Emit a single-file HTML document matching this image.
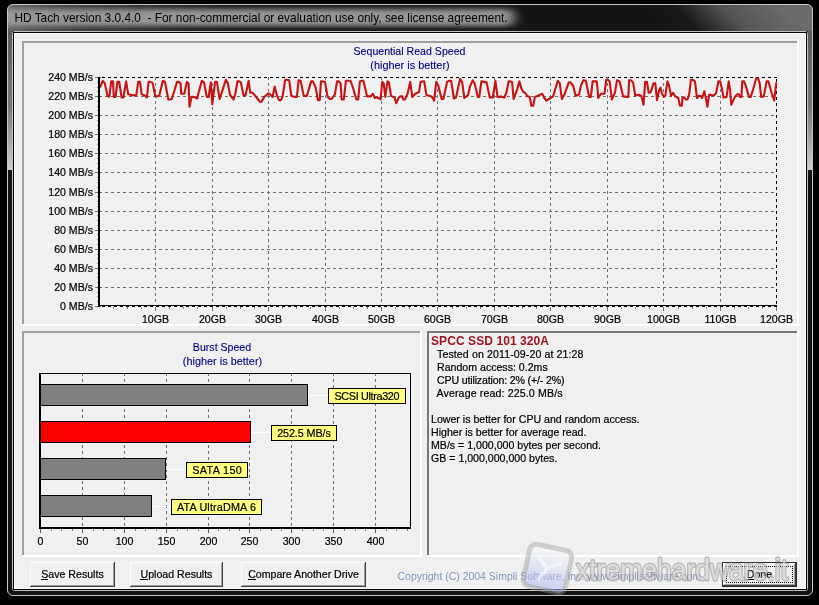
<!DOCTYPE html><html><head><meta charset="utf-8"><style>
html,body{margin:0;padding:0;background:#000;width:819px;height:605px;overflow:hidden}
svg{position:absolute;left:0;top:0;will-change:transform}
text{font-family:"Liberation Sans",sans-serif}
.t{font-size:10.6px;fill:#000;stroke:currentColor;stroke-width:0.2px}
</style></head><body>
<svg width="819" height="605" viewBox="0 0 819 605">
<defs>
<linearGradient id="sideg" x1="0" y1="0" x2="0" y2="1"><stop offset="0" stop-color="#5c5c5c"/><stop offset="0.55" stop-color="#7a7a7a"/><stop offset="1" stop-color="#cfcfcf"/></linearGradient>
<linearGradient id="rtg" gradientUnits="userSpaceOnUse" x1="660" y1="31" x2="760" y2="-65"><stop offset="0" stop-color="#141414"/><stop offset="0.2" stop-color="#191919"/><stop offset="0.45" stop-color="#555555"/><stop offset="0.75" stop-color="#6a6a6a"/><stop offset="1" stop-color="#6e6e6e"/></linearGradient>
<filter id="blurg" x="-20%" y="-100%" width="140%" height="300%"><feGaussianBlur stdDeviation="6 2.4"/></filter>
<linearGradient id="wmg" x1="0" y1="0" x2="0" y2="1"><stop offset="0" stop-color="#ffffff" stop-opacity="0.5"/><stop offset="1" stop-color="#a8b4e8" stop-opacity="0.55"/></linearGradient>
<filter id="blurw" x="-30%" y="-30%" width="160%" height="160%"><feGaussianBlur stdDeviation="1.2"/></filter>
<linearGradient id="ltg" x1="0" y1="0" x2="1" y2="0"><stop offset="0" stop-color="#646464"/><stop offset="0.3" stop-color="#3c3c3c"/><stop offset="1" stop-color="#141414"/></linearGradient>
</defs>
<rect x="7" y="4" width="806" height="592" rx="6" fill="#141414"/>
<clipPath id="fclip"><rect x="7.5" y="4.5" width="805" height="591" rx="5.5"/></clipPath>
<rect x="600" y="4" width="213" height="27" fill="url(#rtg)" clip-path="url(#fclip)"/>
<rect x="8" y="31" width="4" height="139" fill="url(#sideg)"/>
<rect x="808" y="31" width="4" height="139" fill="url(#sideg)"/>
<rect x="7" y="4" width="221" height="27" fill="url(#ltg)" clip-path="url(#fclip)"/>
<clipPath id="tclip"><rect x="8" y="5" width="804" height="26" rx="5"/></clipPath>
<g clip-path="url(#tclip)"><rect x="-4" y="9" width="518" height="17" rx="6" fill="#959595" filter="url(#blurg)"/></g>
<rect x="7.5" y="4.5" width="805" height="591" rx="5.5" fill="none" stroke="#c4c4c4" stroke-width="1"/>
<rect x="12.5" y="31.5" width="795" height="559" rx="2" fill="none" stroke="#c0c0c0" stroke-width="1"/>
<rect x="13.5" y="32.5" width="793" height="557" fill="#f0f0f0" stroke="#000" stroke-width="1"/>
<rect x="14.5" y="33.5" width="791" height="555" fill="none" stroke="#fff" stroke-width="1"/>
<text x="14.4" y="22" style="font-size:11.88px;fill:#000;white-space:pre" xml:space="preserve">HD Tach version 3.0.4.0  - For non-commercial or evaluation use only, see license agreement.</text>
<rect x="22" y="41" width="777" height="2" fill="#a0a0a0"/>
<rect x="22" y="41" width="2" height="285" fill="#a0a0a0"/>
<rect x="22" y="324" width="777" height="2" fill="#fff"/>
<rect x="797" y="41" width="2" height="285" fill="#fff"/>
<rect x="22" y="331" width="400" height="2" fill="#a0a0a0"/>
<rect x="22" y="331" width="2" height="226" fill="#a0a0a0"/>
<rect x="22" y="555" width="400" height="2" fill="#fff"/>
<rect x="420" y="331" width="2" height="226" fill="#fff"/>
<rect x="427" y="331" width="372" height="2" fill="#787878"/>
<rect x="427" y="331" width="2" height="226" fill="#787878"/>
<rect x="427" y="555" width="372" height="2" fill="#fff"/>
<rect x="797" y="331" width="2" height="226" fill="#fff"/>
<text class="t" x="409.5" y="55" text-anchor="middle" style="fill:#000080;stroke:#000080;stroke-width:0.1px">Sequential Read Speed</text>
<text class="t" x="410" y="68.5" text-anchor="middle" style="fill:#000080;stroke:#000080;stroke-width:0.1px;font-size:10.9px">(higher is better)</text>
<line x1="99" y1="96.5" x2="776" y2="96.5" stroke="#707070" stroke-width="1" stroke-dasharray="3 3"/>
<line x1="99" y1="115.5" x2="776" y2="115.5" stroke="#707070" stroke-width="1" stroke-dasharray="3 3"/>
<line x1="99" y1="134.5" x2="776" y2="134.5" stroke="#707070" stroke-width="1" stroke-dasharray="3 3"/>
<line x1="99" y1="153.5" x2="776" y2="153.5" stroke="#707070" stroke-width="1" stroke-dasharray="3 3"/>
<line x1="99" y1="172.5" x2="776" y2="172.5" stroke="#707070" stroke-width="1" stroke-dasharray="3 3"/>
<line x1="99" y1="192.5" x2="776" y2="192.5" stroke="#707070" stroke-width="1" stroke-dasharray="3 3"/>
<line x1="99" y1="211.5" x2="776" y2="211.5" stroke="#707070" stroke-width="1" stroke-dasharray="3 3"/>
<line x1="99" y1="230.5" x2="776" y2="230.5" stroke="#707070" stroke-width="1" stroke-dasharray="3 3"/>
<line x1="99" y1="249.5" x2="776" y2="249.5" stroke="#707070" stroke-width="1" stroke-dasharray="3 3"/>
<line x1="99" y1="268.5" x2="776" y2="268.5" stroke="#707070" stroke-width="1" stroke-dasharray="3 3"/>
<line x1="99" y1="287.5" x2="776" y2="287.5" stroke="#707070" stroke-width="1" stroke-dasharray="3 3"/>
<line x1="98" y1="77.5" x2="777" y2="77.5" stroke="#000" stroke-width="1" stroke-dasharray="3 3" stroke-dashoffset="2"/>
<line x1="155.5" y1="77" x2="155.5" y2="305" stroke="#707070" stroke-width="1" stroke-dasharray="3 3"/>
<line x1="212.5" y1="77" x2="212.5" y2="305" stroke="#707070" stroke-width="1" stroke-dasharray="3 3"/>
<line x1="268.5" y1="77" x2="268.5" y2="305" stroke="#707070" stroke-width="1" stroke-dasharray="3 3"/>
<line x1="325.5" y1="77" x2="325.5" y2="305" stroke="#707070" stroke-width="1" stroke-dasharray="3 3"/>
<line x1="381.5" y1="77" x2="381.5" y2="305" stroke="#707070" stroke-width="1" stroke-dasharray="3 3"/>
<line x1="437.5" y1="77" x2="437.5" y2="305" stroke="#707070" stroke-width="1" stroke-dasharray="3 3"/>
<line x1="494.5" y1="77" x2="494.5" y2="305" stroke="#707070" stroke-width="1" stroke-dasharray="3 3"/>
<line x1="550.5" y1="77" x2="550.5" y2="305" stroke="#707070" stroke-width="1" stroke-dasharray="3 3"/>
<line x1="607.5" y1="77" x2="607.5" y2="305" stroke="#707070" stroke-width="1" stroke-dasharray="3 3"/>
<line x1="663.5" y1="77" x2="663.5" y2="305" stroke="#707070" stroke-width="1" stroke-dasharray="3 3"/>
<line x1="720.5" y1="77" x2="720.5" y2="305" stroke="#707070" stroke-width="1" stroke-dasharray="3 3"/>
<line x1="776.5" y1="77" x2="776.5" y2="306" stroke="#000" stroke-width="1" stroke-dasharray="3 3" stroke-dashoffset="4"/>
<text class="t" x="93" y="81" text-anchor="end">240 MB/s</text>
<rect x="95" y="77" width="6" height="1" fill="#707070"/>
<rect x="97" y="82" width="1" height="1" fill="#909090"/>
<rect x="97" y="87" width="1" height="1" fill="#909090"/>
<rect x="97" y="91" width="1" height="1" fill="#909090"/>
<text class="t" x="93" y="100" text-anchor="end">220 MB/s</text>
<rect x="95" y="96" width="6" height="1" fill="#707070"/>
<rect x="97" y="101" width="1" height="1" fill="#909090"/>
<rect x="97" y="106" width="1" height="1" fill="#909090"/>
<rect x="97" y="110" width="1" height="1" fill="#909090"/>
<text class="t" x="93" y="119" text-anchor="end">200 MB/s</text>
<rect x="95" y="115" width="6" height="1" fill="#707070"/>
<rect x="97" y="120" width="1" height="1" fill="#909090"/>
<rect x="97" y="125" width="1" height="1" fill="#909090"/>
<rect x="97" y="129" width="1" height="1" fill="#909090"/>
<text class="t" x="93" y="138" text-anchor="end">180 MB/s</text>
<rect x="95" y="134" width="6" height="1" fill="#707070"/>
<rect x="97" y="139" width="1" height="1" fill="#909090"/>
<rect x="97" y="144" width="1" height="1" fill="#909090"/>
<rect x="97" y="149" width="1" height="1" fill="#909090"/>
<text class="t" x="93" y="157" text-anchor="end">160 MB/s</text>
<rect x="95" y="153" width="6" height="1" fill="#707070"/>
<rect x="97" y="158" width="1" height="1" fill="#909090"/>
<rect x="97" y="163" width="1" height="1" fill="#909090"/>
<rect x="97" y="168" width="1" height="1" fill="#909090"/>
<text class="t" x="93" y="176" text-anchor="end">140 MB/s</text>
<rect x="95" y="172" width="6" height="1" fill="#707070"/>
<rect x="97" y="177" width="1" height="1" fill="#909090"/>
<rect x="97" y="182" width="1" height="1" fill="#909090"/>
<rect x="97" y="187" width="1" height="1" fill="#909090"/>
<text class="t" x="93" y="196" text-anchor="end">120 MB/s</text>
<rect x="95" y="192" width="6" height="1" fill="#707070"/>
<rect x="97" y="196" width="1" height="1" fill="#909090"/>
<rect x="97" y="201" width="1" height="1" fill="#909090"/>
<rect x="97" y="206" width="1" height="1" fill="#909090"/>
<text class="t" x="93" y="215" text-anchor="end">100 MB/s</text>
<rect x="95" y="211" width="6" height="1" fill="#707070"/>
<rect x="97" y="215" width="1" height="1" fill="#909090"/>
<rect x="97" y="220" width="1" height="1" fill="#909090"/>
<rect x="97" y="225" width="1" height="1" fill="#909090"/>
<text class="t" x="93" y="234" text-anchor="end">80 MB/s</text>
<rect x="95" y="230" width="6" height="1" fill="#707070"/>
<rect x="97" y="234" width="1" height="1" fill="#909090"/>
<rect x="97" y="239" width="1" height="1" fill="#909090"/>
<rect x="97" y="244" width="1" height="1" fill="#909090"/>
<text class="t" x="93" y="253" text-anchor="end">60 MB/s</text>
<rect x="95" y="249" width="6" height="1" fill="#707070"/>
<rect x="97" y="254" width="1" height="1" fill="#909090"/>
<rect x="97" y="258" width="1" height="1" fill="#909090"/>
<rect x="97" y="263" width="1" height="1" fill="#909090"/>
<text class="t" x="93" y="272" text-anchor="end">40 MB/s</text>
<rect x="95" y="268" width="6" height="1" fill="#707070"/>
<rect x="97" y="273" width="1" height="1" fill="#909090"/>
<rect x="97" y="277" width="1" height="1" fill="#909090"/>
<rect x="97" y="282" width="1" height="1" fill="#909090"/>
<text class="t" x="93" y="291" text-anchor="end">20 MB/s</text>
<rect x="95" y="287" width="6" height="1" fill="#707070"/>
<rect x="97" y="292" width="1" height="1" fill="#909090"/>
<rect x="97" y="296" width="1" height="1" fill="#909090"/>
<rect x="97" y="301" width="1" height="1" fill="#909090"/>
<text class="t" x="93" y="310" text-anchor="end">0 MB/s</text>
<rect x="95" y="306" width="6" height="1" fill="#707070"/>
<rect x="155" y="307" width="1" height="4" fill="#707070"/>
<text class="t" x="155.5" y="323" text-anchor="middle">10GB</text>
<rect x="212" y="307" width="1" height="4" fill="#707070"/>
<text class="t" x="212.5" y="323" text-anchor="middle">20GB</text>
<rect x="268" y="307" width="1" height="4" fill="#707070"/>
<text class="t" x="268.5" y="323" text-anchor="middle">30GB</text>
<rect x="325" y="307" width="1" height="4" fill="#707070"/>
<text class="t" x="325.5" y="323" text-anchor="middle">40GB</text>
<rect x="381" y="307" width="1" height="4" fill="#707070"/>
<text class="t" x="381.5" y="323" text-anchor="middle">50GB</text>
<rect x="437" y="307" width="1" height="4" fill="#707070"/>
<text class="t" x="437.5" y="323" text-anchor="middle">60GB</text>
<rect x="494" y="307" width="1" height="4" fill="#707070"/>
<text class="t" x="494.5" y="323" text-anchor="middle">70GB</text>
<rect x="550" y="307" width="1" height="4" fill="#707070"/>
<text class="t" x="550.5" y="323" text-anchor="middle">80GB</text>
<rect x="607" y="307" width="1" height="4" fill="#707070"/>
<text class="t" x="607.5" y="323" text-anchor="middle">90GB</text>
<rect x="663" y="307" width="1" height="4" fill="#707070"/>
<text class="t" x="663.5" y="323" text-anchor="middle">100GB</text>
<rect x="720" y="307" width="1" height="4" fill="#707070"/>
<text class="t" x="720.5" y="323" text-anchor="middle">110GB</text>
<rect x="776" y="307" width="1" height="4" fill="#707070"/>
<text class="t" x="776.5" y="323" text-anchor="middle">120GB</text>
<rect x="113" y="307" width="1" height="2" fill="#808080"/>
<rect x="127" y="307" width="1" height="2" fill="#808080"/>
<rect x="141" y="307" width="1" height="2" fill="#808080"/>
<rect x="169" y="307" width="1" height="2" fill="#808080"/>
<rect x="183" y="307" width="1" height="2" fill="#808080"/>
<rect x="197" y="307" width="1" height="2" fill="#808080"/>
<rect x="226" y="307" width="1" height="2" fill="#808080"/>
<rect x="240" y="307" width="1" height="2" fill="#808080"/>
<rect x="254" y="307" width="1" height="2" fill="#808080"/>
<rect x="282" y="307" width="1" height="2" fill="#808080"/>
<rect x="296" y="307" width="1" height="2" fill="#808080"/>
<rect x="310" y="307" width="1" height="2" fill="#808080"/>
<rect x="339" y="307" width="1" height="2" fill="#808080"/>
<rect x="353" y="307" width="1" height="2" fill="#808080"/>
<rect x="367" y="307" width="1" height="2" fill="#808080"/>
<rect x="395" y="307" width="1" height="2" fill="#808080"/>
<rect x="409" y="307" width="1" height="2" fill="#808080"/>
<rect x="423" y="307" width="1" height="2" fill="#808080"/>
<rect x="452" y="307" width="1" height="2" fill="#808080"/>
<rect x="466" y="307" width="1" height="2" fill="#808080"/>
<rect x="480" y="307" width="1" height="2" fill="#808080"/>
<rect x="508" y="307" width="1" height="2" fill="#808080"/>
<rect x="522" y="307" width="1" height="2" fill="#808080"/>
<rect x="536" y="307" width="1" height="2" fill="#808080"/>
<rect x="565" y="307" width="1" height="2" fill="#808080"/>
<rect x="579" y="307" width="1" height="2" fill="#808080"/>
<rect x="593" y="307" width="1" height="2" fill="#808080"/>
<rect x="621" y="307" width="1" height="2" fill="#808080"/>
<rect x="635" y="307" width="1" height="2" fill="#808080"/>
<rect x="649" y="307" width="1" height="2" fill="#808080"/>
<rect x="678" y="307" width="1" height="2" fill="#808080"/>
<rect x="692" y="307" width="1" height="2" fill="#808080"/>
<rect x="706" y="307" width="1" height="2" fill="#808080"/>
<rect x="734" y="307" width="1" height="2" fill="#808080"/>
<rect x="748" y="307" width="1" height="2" fill="#808080"/>
<rect x="762" y="307" width="1" height="2" fill="#808080"/>
<polyline points="99.9,87.6 102.7,80.8 104.8,83.4 107.6,96.4 109.4,96.4 111.2,81.4 113.0,81.4 113.8,96.9 115.6,96.9 117.4,81.9 119.2,81.9 121.6,97.5 123.4,97.5 126.1,81.4 128.2,94.3 131.3,94.9 134.5,95.4 136.3,95.4 138.2,81.9 140.0,81.9 141.7,94.3 144.8,95.4 146.9,97.5 148.6,81.9 150.4,81.9 152.6,82.9 155.3,96.4 157.1,96.4 159.3,95.4 162.9,80.8 165.0,81.9 168.3,99.5 170.1,99.5 171.8,99.0 177.1,81.9 178.9,81.9 180.6,83.4 181.2,93.8 184.3,93.8 186.9,81.9 188.5,83.4 189.5,106.8 191.6,96.9 193.6,96.9 197.3,98.5 198.3,93.8 201.9,80.8 204.0,82.4 206.8,96.9 208.6,96.9 210.8,82.4 212.3,104.2 215.1,81.9 216.9,81.9 219.6,99.0 221.7,92.8 225.8,79.8 227.9,83.4 230.0,94.9 233.6,99.5 235.7,92.3 237.4,81.4 239.2,81.4 240.9,82.4 243.5,95.4 245.5,95.4 248.7,80.8 250.2,92.8 252.8,92.8 257.0,98.0 259.7,101.6 261.5,101.6 264.3,96.9 268.5,93.3 270.0,94.3 272.6,96.9 274.7,86.5 276.8,94.9 279.0,100.1 280.8,100.1 282.5,96.9 285.2,79.8 287.0,79.8 289.2,80.3 291.3,95.9 295.1,96.9 296.9,96.9 298.6,80.3 300.6,80.8 303.7,95.9 306.9,95.9 311.1,81.4 312.9,81.4 315.7,87.6 317.9,100.1 319.7,100.1 321.0,81.4 322.8,81.4 325.0,81.9 327.6,96.9 329.8,99.0 331.6,99.0 334.9,94.3 337.1,81.4 338.9,81.4 340.6,83.4 341.7,99.5 343.8,99.5 345.9,80.8 350.5,80.8 352.6,86.5 356.4,99.5 358.2,99.5 359.9,81.4 361.6,80.8 363.4,80.8 367.1,96.4 370.8,96.4 372.8,93.8 374.9,98.0 377.0,97.5 379.1,98.5 380.6,99.5 382.2,81.9 383.7,83.4 385.3,96.9 387.4,81.4 388.9,82.4 391.0,95.9 393.1,96.9 394.6,97.5 396.2,103.2 398.8,97.5 400.5,96.4 402.3,96.4 403.1,99.5 404.9,99.5 407.6,93.8 410.2,81.9 412.3,96.9 415.9,93.3 419.0,92.3 420.6,81.9 422.4,81.4 424.2,81.4 426.4,94.9 431.6,96.4 434.2,100.6 436.2,81.9 438.3,85.5 441.6,99.0 443.4,99.0 447.1,81.9 449.4,80.8 451.2,80.8 453.9,98.5 456.0,97.5 460.1,78.8 462.2,82.4 464.3,98.0 467.9,95.4 470.0,86.5 472.6,80.3 474.6,83.4 477.8,96.9 479.3,96.9 481.4,81.4 486.6,82.4 489.7,97.5 492.8,97.5 495.4,80.8 497.5,96.9 500.6,96.9 501.2,96.4 504.3,97.5 506.4,92.8 508.6,81.4 510.4,81.4 512.1,81.9 513.6,99.0 516.8,90.7 519.4,81.4 521.4,88.6 523.5,92.3 525.1,92.8 527.1,95.9 529.7,96.9 531.4,105.8 533.2,105.8 534.9,96.9 537.5,95.9 542.2,93.8 544.3,98.0 546.3,100.6 550.0,98.5 553.1,96.4 557.8,80.8 559.8,83.4 561.9,99.0 564.5,94.3 568.8,82.4 570.6,82.4 573.3,86.0 575.5,95.4 577.3,95.4 579.0,94.3 581.0,85.5 583.3,80.3 585.9,80.8 589.1,96.9 590.9,96.9 592.6,81.4 596.8,81.4 598.3,98.0 600.9,93.8 604.5,93.8 606.2,79.8 608.0,79.8 609.7,81.4 611.8,99.5 614.9,92.8 617.0,80.3 619.6,81.4 623.2,96.4 626.5,96.9 628.3,96.9 629.1,80.3 630.9,80.3 633.1,82.4 635.2,95.4 639.3,94.9 641.4,95.9 643.5,104.7 645.2,81.9 647.0,81.9 648.7,92.8 650.7,92.3 653.5,83.4 655.3,83.4 657.0,100.1 659.0,90.7 660.6,87.6 661.7,92.8 663.8,96.9 665.3,95.9 667.4,81.4 669.0,85.5 671.0,95.9 673.1,92.8 675.2,96.4 678.3,98.0 680.0,105.8 681.8,105.8 682.6,97.5 684.4,97.5 685.7,99.5 687.5,99.5 689.2,94.3 690.9,79.8 692.7,79.8 694.9,81.4 697.0,98.0 698.7,95.9 700.5,95.9 702.2,98.0 704.3,91.2 705.8,98.0 707.4,106.8 709.1,94.9 710.9,94.9 712.2,95.4 714.0,95.4 716.2,92.8 718.4,81.4 720.2,81.4 721.9,88.6 723.5,97.5 726.6,96.9 728.7,81.4 730.2,90.7 731.2,104.7 734.9,96.9 737.1,94.3 738.9,94.3 739.7,96.9 741.5,96.9 742.2,81.4 744.0,81.4 745.7,85.5 748.9,96.9 750.7,96.9 752.9,90.2 756.2,78.2 758.0,78.2 759.7,83.4 761.2,96.9 763.8,96.4 766.6,81.4 768.4,81.4 771.6,92.8 774.2,100.6 776.3,82.4" fill="none" stroke="#c41414" stroke-width="2.1" stroke-linejoin="round"/>
<rect x="98" y="77" width="2" height="230" fill="#000"/>
<rect x="98" y="305" width="679" height="1" fill="#000"/>
<line x1="98" y1="306.5" x2="777" y2="306.5" stroke="#000" stroke-width="1" stroke-dasharray="3 3" stroke-dashoffset="2"/>
<text class="t" x="222" y="351" text-anchor="middle" style="fill:#000080;stroke:#000080;stroke-width:0.1px">Burst Speed</text>
<text class="t" x="222.5" y="364.5" text-anchor="middle" style="fill:#000080;stroke:#000080;stroke-width:0.1px;font-size:10.9px">(higher is better)</text>
<line x1="82.5" y1="373" x2="82.5" y2="527" stroke="#707070" stroke-width="1" stroke-dasharray="3 3"/>
<line x1="124.5" y1="373" x2="124.5" y2="527" stroke="#707070" stroke-width="1" stroke-dasharray="3 3"/>
<line x1="166.5" y1="373" x2="166.5" y2="527" stroke="#707070" stroke-width="1" stroke-dasharray="3 3"/>
<line x1="208.5" y1="373" x2="208.5" y2="527" stroke="#707070" stroke-width="1" stroke-dasharray="3 3"/>
<line x1="249.5" y1="373" x2="249.5" y2="527" stroke="#707070" stroke-width="1" stroke-dasharray="3 3"/>
<line x1="291.5" y1="373" x2="291.5" y2="527" stroke="#707070" stroke-width="1" stroke-dasharray="3 3"/>
<line x1="333.5" y1="373" x2="333.5" y2="527" stroke="#707070" stroke-width="1" stroke-dasharray="3 3"/>
<line x1="375.5" y1="373" x2="375.5" y2="527" stroke="#707070" stroke-width="1" stroke-dasharray="3 3"/>
<rect x="39" y="373" width="372" height="1" fill="#000"/>
<rect x="410" y="373" width="1" height="155" fill="#000"/>
<rect x="40.5" y="384.5" width="267" height="21" fill="#808080" stroke="#000" stroke-width="1"/>
<rect x="308" y="395" width="20" height="1" fill="#fff"/>
<rect x="328.5" y="388.5" width="77" height="15" fill="#ffff80" stroke="#000" stroke-width="1"/>
<text class="t" x="367.0" y="400" text-anchor="middle" style="font-size:10.8px" textLength="65" lengthAdjust="spacing">SCSI Ultra320</text>
<rect x="40.5" y="421.5" width="210" height="21" fill="#ff0000" stroke="#000" stroke-width="1"/>
<rect x="251" y="432" width="20" height="1" fill="#fff"/>
<rect x="271.5" y="425.5" width="65" height="15" fill="#ffff80" stroke="#000" stroke-width="1"/>
<text class="t" x="304.0" y="437" text-anchor="middle" style="font-size:10.8px" textLength="53.7" lengthAdjust="spacing">252.5 MB/s</text>
<rect x="40.5" y="458.5" width="125" height="21" fill="#808080" stroke="#000" stroke-width="1"/>
<rect x="166" y="469" width="20" height="1" fill="#fff"/>
<rect x="186.5" y="462.5" width="61" height="15" fill="#ffff80" stroke="#000" stroke-width="1"/>
<text class="t" x="217.0" y="474" text-anchor="middle" style="font-size:10.8px" textLength="49.6" lengthAdjust="spacing">SATA 150</text>
<rect x="40.5" y="495.5" width="111" height="21" fill="#808080" stroke="#000" stroke-width="1"/>
<rect x="152" y="506" width="19" height="1" fill="#fff"/>
<rect x="171.5" y="499.5" width="90" height="15" fill="#ffff80" stroke="#000" stroke-width="1"/>
<text class="t" x="216.5" y="511" text-anchor="middle" style="font-size:10.8px" textLength="79" lengthAdjust="spacing">ATA UltraDMA 6</text>
<rect x="39" y="373" width="2" height="156" fill="#000"/>
<rect x="39" y="527" width="372" height="2" fill="#000"/>
<rect x="40" y="529" width="1" height="4" fill="#606060"/>
<text class="t" x="40.5" y="545" text-anchor="middle">0</text>
<rect x="82" y="529" width="1" height="4" fill="#606060"/>
<text class="t" x="82.5" y="545" text-anchor="middle">50</text>
<rect x="124" y="529" width="1" height="4" fill="#606060"/>
<text class="t" x="124.5" y="545" text-anchor="middle">100</text>
<rect x="166" y="529" width="1" height="4" fill="#606060"/>
<text class="t" x="166.5" y="545" text-anchor="middle">150</text>
<rect x="208" y="529" width="1" height="4" fill="#606060"/>
<text class="t" x="208.5" y="545" text-anchor="middle">200</text>
<rect x="249" y="529" width="1" height="4" fill="#606060"/>
<text class="t" x="249.5" y="545" text-anchor="middle">250</text>
<rect x="291" y="529" width="1" height="4" fill="#606060"/>
<text class="t" x="291.5" y="545" text-anchor="middle">300</text>
<rect x="333" y="529" width="1" height="4" fill="#606060"/>
<text class="t" x="333.5" y="545" text-anchor="middle">350</text>
<rect x="375" y="529" width="1" height="4" fill="#606060"/>
<text class="t" x="375.5" y="545" text-anchor="middle">400</text>
<rect x="51" y="529" width="1" height="2" fill="#808080"/>
<rect x="61" y="529" width="1" height="2" fill="#808080"/>
<rect x="72" y="529" width="1" height="2" fill="#808080"/>
<rect x="93" y="529" width="1" height="2" fill="#808080"/>
<rect x="103" y="529" width="1" height="2" fill="#808080"/>
<rect x="114" y="529" width="1" height="2" fill="#808080"/>
<rect x="135" y="529" width="1" height="2" fill="#808080"/>
<rect x="145" y="529" width="1" height="2" fill="#808080"/>
<rect x="156" y="529" width="1" height="2" fill="#808080"/>
<rect x="177" y="529" width="1" height="2" fill="#808080"/>
<rect x="187" y="529" width="1" height="2" fill="#808080"/>
<rect x="198" y="529" width="1" height="2" fill="#808080"/>
<rect x="218" y="529" width="1" height="2" fill="#808080"/>
<rect x="229" y="529" width="1" height="2" fill="#808080"/>
<rect x="239" y="529" width="1" height="2" fill="#808080"/>
<rect x="260" y="529" width="1" height="2" fill="#808080"/>
<rect x="271" y="529" width="1" height="2" fill="#808080"/>
<rect x="281" y="529" width="1" height="2" fill="#808080"/>
<rect x="302" y="529" width="1" height="2" fill="#808080"/>
<rect x="313" y="529" width="1" height="2" fill="#808080"/>
<rect x="323" y="529" width="1" height="2" fill="#808080"/>
<rect x="344" y="529" width="1" height="2" fill="#808080"/>
<rect x="355" y="529" width="1" height="2" fill="#808080"/>
<rect x="365" y="529" width="1" height="2" fill="#808080"/>
<rect x="386" y="529" width="1" height="2" fill="#808080"/>
<rect x="396" y="529" width="1" height="2" fill="#808080"/>
<rect x="407" y="529" width="1" height="2" fill="#808080"/>
<text x="431" y="345" style="font-size:12px;font-weight:bold;fill:#a01422;letter-spacing:0.08px">SPCC SSD 101 320A</text>
<text class="t" x="437" y="358" textLength="146.5" lengthAdjust="spacing">Tested on 2011-09-20 at 21:28</text>
<text class="t" x="437" y="371">Random access: 0.2ms</text>
<text class="t" x="437" y="384" textLength="127.5" lengthAdjust="spacing">CPU utilization: 2% (+/- 2%)</text>
<text class="t" x="436.5" y="397" textLength="126" lengthAdjust="spacing">Average read: 225.0 MB/s</text>
<text class="t" x="431" y="423">Lower is better for CPU and random access.</text>
<text class="t" x="431" y="436">Higher is better for average read.</text>
<text class="t" x="431" y="449">MB/s = 1,000,000 bytes per second.</text>
<text class="t" x="431" y="462">GB = 1,000,000,000 bytes.</text>
<rect x="30" y="562" width="85" height="25" fill="#404040"/>
<rect x="30" y="562" width="84" height="24" fill="#fff"/>
<rect x="31" y="563" width="83" height="23" fill="#a0a0a0"/>
<rect x="31" y="563" width="82" height="22" fill="#f0f0f0"/>
<text class="t" x="72.5" y="578.0" text-anchor="middle">Save Results</text>
<rect x="130" y="562" width="93" height="25" fill="#404040"/>
<rect x="130" y="562" width="92" height="24" fill="#fff"/>
<rect x="131" y="563" width="91" height="23" fill="#a0a0a0"/>
<rect x="131" y="563" width="90" height="22" fill="#f0f0f0"/>
<text class="t" x="176.5" y="578.0" text-anchor="middle">Upload Results</text>
<rect x="241" y="562" width="125" height="25" fill="#404040"/>
<rect x="241" y="562" width="124" height="24" fill="#fff"/>
<rect x="242" y="563" width="123" height="23" fill="#a0a0a0"/>
<rect x="242" y="563" width="122" height="22" fill="#f0f0f0"/>
<text class="t" x="303.5" y="578.0" text-anchor="middle">Compare Another Drive</text>
<rect x="722" y="562" width="75" height="25" fill="#2a2a2a"/>
<rect x="723" y="563" width="73" height="23" fill="#404040"/>
<rect x="723" y="563" width="72" height="22" fill="#fff"/>
<rect x="724" y="564" width="71" height="21" fill="#a0a0a0"/>
<rect x="724" y="564" width="70" height="20" fill="#f0f0f0"/>
<text class="t" x="759.5" y="578.0" text-anchor="middle">Done</text>
<rect x="41" y="579" width="7" height="1" fill="#000"/>
<rect x="140" y="579" width="8" height="1" fill="#000"/>
<rect x="248" y="579" width="8" height="1" fill="#000"/>
<rect x="746" y="579" width="8" height="1" fill="#000"/>
<path d="M726 566h1v1h-1z M726 582h1v1h-1z M728 566h1v1h-1z M728 582h1v1h-1z M730 566h1v1h-1z M730 582h1v1h-1z M732 566h1v1h-1z M732 582h1v1h-1z M734 566h1v1h-1z M734 582h1v1h-1z M736 566h1v1h-1z M736 582h1v1h-1z M738 566h1v1h-1z M738 582h1v1h-1z M740 566h1v1h-1z M740 582h1v1h-1z M742 566h1v1h-1z M742 582h1v1h-1z M744 566h1v1h-1z M744 582h1v1h-1z M746 566h1v1h-1z M746 582h1v1h-1z M748 566h1v1h-1z M748 582h1v1h-1z M750 566h1v1h-1z M750 582h1v1h-1z M752 566h1v1h-1z M752 582h1v1h-1z M754 566h1v1h-1z M754 582h1v1h-1z M756 566h1v1h-1z M756 582h1v1h-1z M758 566h1v1h-1z M758 582h1v1h-1z M760 566h1v1h-1z M760 582h1v1h-1z M762 566h1v1h-1z M762 582h1v1h-1z M764 566h1v1h-1z M764 582h1v1h-1z M766 566h1v1h-1z M766 582h1v1h-1z M768 566h1v1h-1z M768 582h1v1h-1z M770 566h1v1h-1z M770 582h1v1h-1z M772 566h1v1h-1z M772 582h1v1h-1z M774 566h1v1h-1z M774 582h1v1h-1z M776 566h1v1h-1z M776 582h1v1h-1z M778 566h1v1h-1z M778 582h1v1h-1z M780 566h1v1h-1z M780 582h1v1h-1z M782 566h1v1h-1z M782 582h1v1h-1z M784 566h1v1h-1z M784 582h1v1h-1z M786 566h1v1h-1z M786 582h1v1h-1z M788 566h1v1h-1z M788 582h1v1h-1z M790 566h1v1h-1z M790 582h1v1h-1z M792 566h1v1h-1z M792 582h1v1h-1z M726 568h1v1h-1z M792 568h1v1h-1z M726 570h1v1h-1z M792 570h1v1h-1z M726 572h1v1h-1z M792 572h1v1h-1z M726 574h1v1h-1z M792 574h1v1h-1z M726 576h1v1h-1z M792 576h1v1h-1z M726 578h1v1h-1z M792 578h1v1h-1z M726 580h1v1h-1z M792 580h1v1h-1z" fill="#000"/>
<text class="t" x="397.5" y="579.5" style="fill:#8494b8;stroke:none;font-size:10.48px">Copyright (C) 2004 Simpli Software, Inc. www.simplisoftware.com</text>
<g transform="translate(0 2.5) rotate(12 547.5 566)"><rect x="526" y="544.5" width="43" height="43" rx="7" fill="url(#wmg)" stroke="#9c9c9c" stroke-opacity="0.42" stroke-width="5"/><path d="M537 557 L547 566 L559 558 M547 566 L541 578" fill="none" stroke="#fff" stroke-opacity="0.5" stroke-width="4" stroke-linecap="round"/></g>
<text x="576" y="579.5" textLength="212" lengthAdjust="spacingAndGlyphs" style="font-size:30px;fill:#ffffff;fill-opacity:0.5;stroke:#888888;stroke-opacity:0.5;stroke-width:3px;paint-order:stroke;stroke-linejoin:round">xtremehardware.it</text>
</svg></body></html>
